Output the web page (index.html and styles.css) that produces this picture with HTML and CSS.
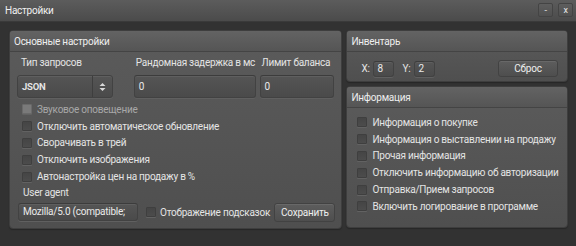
FILE: index.html
```html
<!DOCTYPE html>
<html lang="ru">
<head>
<meta charset="utf-8">
<title>Настройки</title>
<link rel="stylesheet" href="styles.css">
</head>
<body>
<div class="window">
  <div class="titlebar">
    <span class="title">Настройки</span>
    <div class="winbtns">
      <span class="winbtn">-</span>
      <span class="winbtn">x</span>
    </div>
  </div>
  <div class="content">
    <section class="panel main">
      <div class="panel-head">Основные настройки</div>
      <div class="panel-body main-body">
        <div class="fields">
          <div class="field f1">
            <span class="label">Тип запросов</span>
            <div class="select"><span class="select-val">JSON</span><span class="spin"><svg width="7" height="10" viewBox="0 0 7 10"><path d="M0.5 4 L3.5 1 L6.5 4 Z M0.5 6 L3.5 9 L6.5 6 Z" fill="#d8d8d8"/></svg></span></div>
          </div>
          <div class="field f2">
            <span class="label">Рандомная задержка в мс</span>
            <div class="input tall">0</div>
          </div>
          <div class="field f3">
            <span class="label">Лимит баланса</span>
            <div class="input tall">0</div>
          </div>
        </div>
        <div class="checks">
          <div class="check disabled"><span class="box"></span>Звуковое оповещение</div>
          <div class="check"><span class="box"></span>Отключить автоматическое обновление</div>
          <div class="check"><span class="box"></span>Сворачивать в трей</div>
          <div class="check"><span class="box"></span>Отключить изображения</div>
          <div class="check"><span class="box"></span>Автонастройка цен на продажу в %</div>
        </div>
        <div class="ua-label">User agent</div>
        <div class="bottom-row">
          <div class="input ua">Mozilla/5.0 (compatible;</div>
          <div class="check hints"><span class="box"></span>Отображение подсказок</div>
          <span class="button save">Сохранить</span>
        </div>
      </div>
    </section>
    <div class="side">
      <section class="panel inv">
        <div class="panel-head">Инвентарь</div>
        <div class="panel-body inv-body">
          <span class="coord">X:</span><div class="input small">8</div>
          <span class="coord y">Y:</span><div class="input small">2</div>
          <span class="button reset">Сброс</span>
        </div>
      </section>
      <section class="panel info">
        <div class="panel-head">Информация</div>
        <div class="panel-body info-body">
          <div class="check"><span class="box"></span>Информация о покупке</div>
          <div class="check"><span class="box"></span>Информация о выставлении на продажу</div>
          <div class="check"><span class="box"></span>Прочая информация</div>
          <div class="check"><span class="box"></span>Отключить информацию об авторизации</div>
          <div class="check"><span class="box"></span>Отправка/Прием запросов</div>
          <div class="check"><span class="box"></span>Включить логирование в программе</div>
        </div>
      </section>
    </div>
  </div>
</div>
</body>
</html>
```
FILE: styles.css
```css
* { box-sizing: border-box; }
html, body { margin: 0; padding: 0; }
body {
  width: 576px;
  height: 246px;
  background: #2f2f2f;
  font-family: "Roboto", "Noto Sans", sans-serif;
  font-size: 10px;
  letter-spacing: -0.25px;
  color: #e4e4e4;
  overflow: hidden;
}
.window {
  width: 576px;
  height: 246px;
  background: #323232;
}
.titlebar {
  height: 22px;
  display: flex;
  align-items: center;
  justify-content: space-between;
  padding: 0 3px 0 5px;
  background: linear-gradient(#5c5c5c, #4b4b4b);
  border-bottom: 1px solid #3a3a3a;
}
.title { font-size: 10px; color: #f0f0f0; }
.winbtns { display: flex; gap: 5px; margin-top: -1px; }
.winbtn {
  width: 15px;
  height: 14px;
  display: flex;
  align-items: center;
  justify-content: center;
  font-size: 9px;
  line-height: 1;
  color: #e8e8e8;
  background: linear-gradient(#5e5e5e, #505050);
  border: 1px solid #444;
  border-radius: 2px;
}
.content {
  display: flex;
  gap: 4px;
  padding: 8px 8px 0 9px;
}
.panel {
  border: 1px solid #3e3e3e;
  border-radius: 4px;
  background: linear-gradient(#5b5b5b, #4f4f4f);
  box-shadow: inset 0 1px 0 #6a6a6a, 0 1px 1px #262626;
  overflow: hidden;
}
.panel-head {
  height: 21px;
  padding-left: 4px;
  display: flex;
  align-items: center;
  font-size: 10px;
  color: #eeeeee;
  background: linear-gradient(#636363, #555555);
  border-bottom: 1px solid #444;
}
.main { width: 334px; height: 199px; }
.main-body { padding: 2px 7px 0 7px; }
.fields { display: flex; gap: 0; }
.field { display: flex; flex-direction: column; }
.f1 { width: 96px; margin-right: 21px; }
.f2 { width: 122px; margin-right: 4px; }
.f3 { width: 75px; }
.label { height: 15px; line-height: 15px; padding-left: 4px; margin-top: 1px; margin-bottom: 5px; white-space: nowrap; }
.f2 .label, .f3 .label { padding-left: 2px; }
.input {
  height: 18px;
  line-height: 16px;
  padding-left: 4px;
  background: linear-gradient(#555, #4a4a4a);
  border: 1px solid #424242;
  border-top-color: #3c3c3c;
  border-radius: 3px;
  box-shadow: inset 0 1px 0 #5f5f5f, 0 1px 0 #606060;
  color: #eaeaea;
  white-space: nowrap;
  overflow: hidden;
}
.input.tall { height: 23px; line-height: 21px; }
.select {
  height: 23px;
  display: flex;
  background: linear-gradient(#555, #4a4a4a);
  border: 1px solid #424242;
  border-radius: 3px;
  box-shadow: inset 0 1px 0 #5f5f5f, 0 1px 0 #606060;
}
.select-val { flex: 1; padding-left: 4px; line-height: 21px; font-weight: 700; font-size: 9.5px; }
.spin {
  width: 20px;
  display: flex;
  align-items: center;
  justify-content: center;
  border-left: 1px solid #3e3e3e;
}
.checks { display: flex; flex-direction: column; margin-top: 3px; }
.check {
  display: flex;
  align-items: center;
  height: 16.8px;
  white-space: nowrap;
}
.box {
  width: 10px;
  height: 10px;
  margin-right: 5px;
  background: linear-gradient(#454545, #4c4c4c);
  border: 1px solid #3f3f3f;
  box-shadow: 0 1px 0 #626262;
  border-radius: 1px;
  flex: none;
}
.checks .check .box { margin-left: 5px; }
.disabled { color: #a8a8a8; }
.disabled .box { background: #7a7a7a; border-color: #6a6a6a; }
.ua-label { height: 16px; line-height: 16px; padding-left: 6px; margin-top: 0px; }
.bottom-row { display: flex; align-items: center; margin-top: 2px; }
.input.ua { width: 120px; margin-left: 1px; }
.hints { margin-left: 8px; }
.hints .box { margin-right: 4px; }
.button {
  display: flex;
  align-items: center;
  justify-content: center;
  color: #eeeeee;
  background: linear-gradient(#5d5d5d, #4e4e4e);
  border: 1px solid #424242;
  border-radius: 3px;
  box-shadow: inset 0 1px 0 #686868;
}
.save { width: 61px; height: 19px; margin-left: auto; margin-right: -1px; }
.side { width: 222px; display: flex; flex-direction: column; gap: 4px; }
.inv { height: 52px; }
.inv-body { display: flex; align-items: center; padding: 8px 9px 0 14px; }
.coord { margin-right: 3px; }
.coord.y { margin-left: 9px; }
.input.small { width: 21px; height: 16px; line-height: 14px; }
.reset { width: 60px; height: 17px; margin-left: auto; }
.info { height: 142px; }
.info-body { padding: 6px 0 0 10px; }
.info-body .check .box { margin-right: 5px; }
```
